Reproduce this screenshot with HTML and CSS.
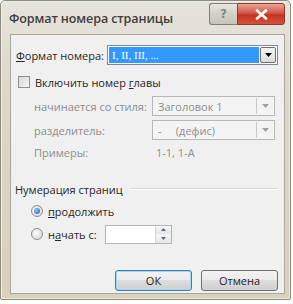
FILE: index.html
```html
<!DOCTYPE html>
<html lang="ru">
<head>
<meta charset="utf-8">
<title>Формат номера страницы</title>
<link rel="stylesheet" href="styles.css">
</head>
<body>
<div class="window">
  <div class="titlebar">
    <span class="title">Формат номера страницы</span>
    <div class="caption-buttons">
      <div class="cap-btn help">?</div>
      <div class="cap-btn close">
        <svg width="13" height="11" viewBox="0 0 13 11"><path d="M2 1.5 L11 9.5 M11 1.5 L2 9.5" stroke="#fff" stroke-width="2.6" stroke-linecap="round"/></svg>
      </div>
    </div>
  </div>
  <div class="client">
    <div class="row format-row">
      <span class="label"><u>Ф</u>ормат номера:</span>
      <div class="combo active">
        <span class="combo-text selected">I, II, III, ...</span>
        <span class="combo-btn"><svg width="7" height="4" viewBox="0 0 7 4"><path d="M0 0H7L3.5 4Z" fill="#000"/></svg></span>
      </div>
    </div>
    <div class="row check-row">
      <span class="checkbox"></span>
      <span class="label">Включить номер <u>г</u>лавы</span>
    </div>
    <div class="row sub-row first">
      <span class="label disabled sub-label">начинается со стиля:</span>
      <div class="combo disabled-combo">
        <span class="combo-text">Заголовок 1</span>
        <span class="combo-btn"><svg width="7" height="4" viewBox="0 0 7 4"><path d="M0 0H7L3.5 4Z" fill="#a0a0a0"/></svg></span>
      </div>
    </div>
    <div class="row sub-row">
      <span class="label disabled sub-label">разделитель:</span>
      <div class="combo disabled-combo">
        <span class="combo-text">-&nbsp;&nbsp;&nbsp;&nbsp;&nbsp;(дефис)</span>
        <span class="combo-btn"><svg width="7" height="4" viewBox="0 0 7 4"><path d="M0 0H7L3.5 4Z" fill="#a0a0a0"/></svg></span>
      </div>
    </div>
    <div class="row example-row">
      <span class="label disabled sub-label">Примеры:</span>
      <span class="label disabled example">1-1, 1-А</span>
    </div>
    <div class="group-head">
      <span class="label">Нумерация страниц</span>
      <span class="group-line"></span>
    </div>
    <div class="row radio-row first">
      <span class="radio checked"><span class="dot"></span></span>
      <span class="label"><u>п</u>родолжить</span>
    </div>
    <div class="row radio-row">
      <span class="radio"></span>
      <span class="label radio-label">н<u>а</u>чать с:</span>
      <div class="spin">
        <span class="spin-field"></span>
        <span class="spin-btns">
          <span class="spin-b"><svg width="5" height="3" viewBox="0 0 5 3"><path d="M0 3H5L2.5 0Z" fill="#4a6a9a"/></svg></span>
          <span class="spin-b"><svg width="5" height="3" viewBox="0 0 5 3"><path d="M0 0H5L2.5 3Z" fill="#4a6a9a"/></svg></span>
        </span>
      </div>
    </div>
    <div class="buttons">
      <div class="btn default">ОК</div>
      <div class="btn">Отмена</div>
    </div>
  </div>
</div>
</body>
</html>
```

FILE: styles.css
```css
* { box-sizing: border-box; }
html, body { margin: 0; padding: 0; }
body {
  background: #ffffff;
  font-family: "Open Sans", "Noto Sans", sans-serif;
  font-size: 11px;
  color: #262626;
  width: 293px;
  height: 304px;
  overflow: hidden;
}
u { text-decoration: underline; text-underline-offset: 1px; }
.window {
  width: 291px;
  height: 300px;
  background: linear-gradient(#e6e4de, #dcd7c8 30%, #d8d1bd);
  border: 1px solid #8e8a7c;
  border-radius: 5px 5px 2px 2px;
  display: flex;
  flex-direction: column;
  padding: 0 5px 5px 9px;
  box-shadow: inset 1px 1px 0 #f2f0ea, inset -1px -1px 0 #ece8dc;
}
.titlebar {
  height: 33px;
  display: flex;
  align-items: flex-start;
  justify-content: space-between;
}
.title {
  font-size: 12.5px;
  color: #222;
  margin-top: 9px;
  margin-left: -1px;
  letter-spacing: -0.1px;
  font-weight: 600;
  opacity: 0.85;
}
.caption-buttons {
  display: flex;
  margin-top: 2px;
}
.cap-btn {
  height: 22px;
  display: flex;
  align-items: center;
  justify-content: center;
  border: 1px solid #7a7e88;
}
.help {
  width: 28px;
  border-right: none;
  border-radius: 3px 0 0 3px;
  background: linear-gradient(#e8e5de, #d4d0c6 50%, #c8c4b8);
  color: #7f8596;
  font-weight: bold;
  font-size: 12px;
  font-family: "DejaVu Sans", sans-serif;
}
.close {
  width: 48px;
  border-radius: 0 3px 3px 0;
  background: linear-gradient(#e9a496, #d3584a 45%, #c4341f 55%, #d45338);
  border-color: #8b3a30;
}
.client {
  flex: 1;
  background: #f0f0f0;
  border: 1px solid #aaa79c;
  display: flex;
  flex-direction: column;
  padding: 0 6px 0 5px;
}
.row { display: flex; align-items: center; }
.label { white-space: nowrap; }
.disabled { color: #8e8e8e; }
.format-row {
  margin-top: 10px;
  height: 20px;
  justify-content: space-between;
}
.combo {
  display: flex;
  height: 20px;
  border: 1px solid #828790;
  background: #fff;
}
.active { width: 171px; padding: 1px; }
.combo-text {
  flex: 1;
  display: flex;
  align-items: center;
  padding-left: 3px;
  white-space: nowrap;
}
.selected {
  background: #3399ff;
  color: #fff;
  font-family: "Liberation Serif", serif;
  font-size: 11px;
  margin-right: 1px;
}
.combo-btn {
  width: 16px;
  display: flex;
  align-items: center;
  justify-content: center;
  background: linear-gradient(#f4f4f4, #dcdcdc);
  border: 1px solid #707070;
  border-radius: 2px;
}
.check-row { margin-top: 11px; height: 12px; padding-left: 2px; }
.checkbox {
  width: 12px;
  height: 12px;
  border: 1px solid #8f8f8f;
  background: linear-gradient(135deg, #d6d6d6, #f6f6f6);
  margin-right: 5px;
}
.sub-row {
  height: 20px;
  margin-top: 4px;
  padding-left: 18px;
}
.sub-row.first { margin-top: 8px; }
.sub-label { width: 118px; }
.disabled-combo {
  width: 123px;
  background: #f4f4f4;
  border-color: #b8b8b8;
  color: #8e8e8e;
  padding: 1px;
}
.disabled-combo .combo-text { padding-left: 4px; }
.disabled-combo .combo-btn {
  background: #f4f4f4;
  border: none;
  border-left: 1px solid #c8c8c8;
  border-radius: 0;
  width: 17px;
}
.example-row { margin-top: 5px; height: 14px; padding-left: 18px; }
.example { margin-left: 4px; }
.group-head {
  display: flex;
  align-items: center;
  margin-top: 23px;
  margin-left: -1px;
  height: 14px;
}
.group-line {
  flex: 1;
  height: 2px;
  border-top: 1px solid #d5d5d5;
  border-bottom: 1px solid #ffffff;
  margin-left: 7px;
  margin-right: 1px;
}
.radio-row { padding-left: 15px; height: 20px; }
.radio-row.first { margin-top: 5px; }
.radio-row + .radio-row { margin-top: 3px; }
.radio {
  width: 12px;
  height: 12px;
  border-radius: 50%;
  border: 1px solid #8f8f8f;
  background: radial-gradient(circle at 40% 40%, #fafafa, #d4d4d4);
  margin-right: 5px;
  display: flex;
  align-items: center;
  justify-content: center;
}
.dot {
  width: 6px;
  height: 6px;
  border-radius: 50%;
  background: radial-gradient(circle at 35% 35%, #8fc6f2, #1a5ea8);
}
.radio-label { width: 57px; }
.spin {
  display: flex;
  width: 67px;
  height: 19px;
  border: 1px solid #b5b5b5;
  background: #fff;
}
.spin-field { flex: 1; }
.spin-btns {
  width: 16px;
  display: flex;
  flex-direction: column;
  border-left: 1px solid #d6d6d6;
}
.spin-b {
  flex: 1;
  display: flex;
  align-items: center;
  justify-content: center;
  background: linear-gradient(#f6f6f6, #e6e6e6);
}
.buttons {
  display: flex;
  justify-content: flex-end;
  gap: 9px;
  margin-top: 26px;
}
.btn {
  width: 77px;
  height: 21px;
  border: 1px solid #707070;
  border-radius: 3px;
  background: linear-gradient(#f3f3f3, #ebebeb 45%, #dddddd 50%, #cfcfcf);
  display: flex;
  align-items: center;
  justify-content: center;
  font-size: 11px;
}
.btn.default {
  border-color: #3c7fb1;
  box-shadow: inset 0 0 0 1px #9fd8f8;
}
```
